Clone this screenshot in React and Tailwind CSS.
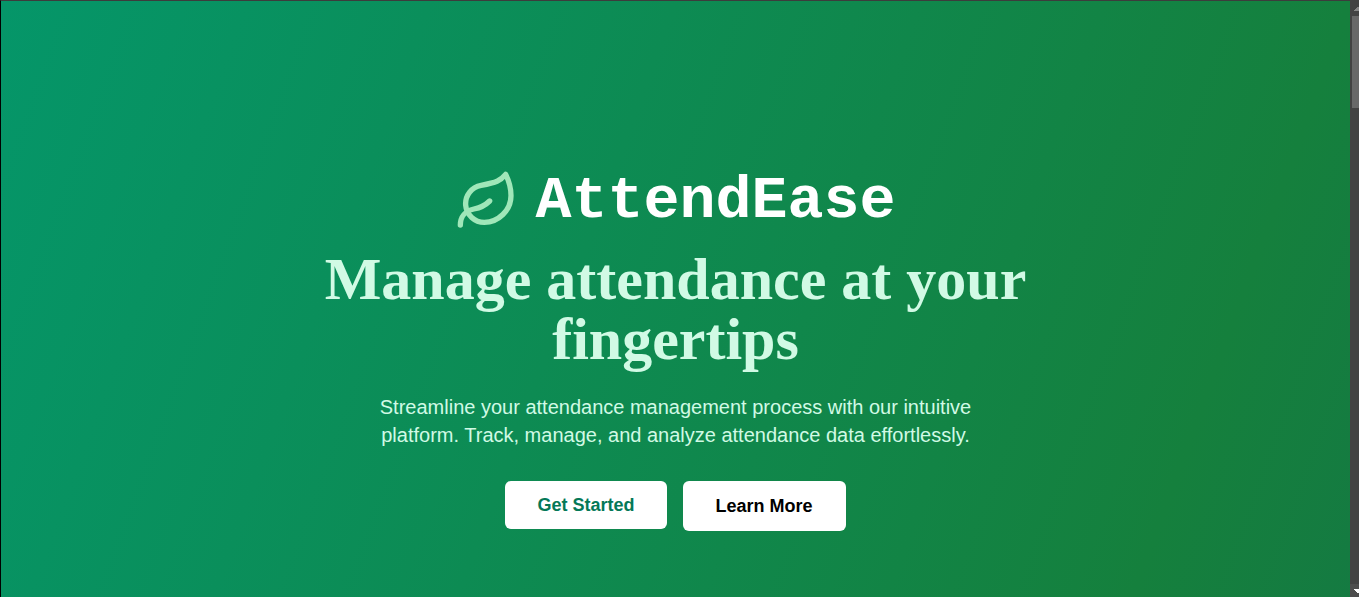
import { Leaf } from "lucide-react";

function Scrollbar() {
  return (
    <div className="flex h-full w-[9px] shrink-0 flex-col overflow-hidden bg-[#424242] pl-0.5">
      <svg className="h-4 w-[7px] shrink-0" viewBox="0 0 7 16" shapeRendering="crispEdges">
        <path d="M5 7h2v1H5zM4 8h3v1H4zM3 9h4v1H3zM2 10h5v1H2z" fill="#868686" />
      </svg>
      <div className="h-[92px] shrink-0 bg-[#686868]" />
      <div className="grow" />
      <svg className="-ml-0.5 h-[13px] w-[9px] shrink-0 bg-[#4d4d4d]" viewBox="0 0 9 13" shapeRendering="crispEdges">
        <path d="M4 5h5v1H4zM5 6h4v1H5zM6 7h3v1H6zM7 8h2v1H7z" fill="#fff" />
      </svg>
    </div>
  );
}

export default function App() {
  return (
    <div className="flex h-[597px] w-[1359px] overflow-hidden bg-[#424242]">
      <div className="w-[1350px] shrink-0 border-l border-t border-l-black border-t-[#3c3c3c]">
        <main className="flex h-[596px] flex-col items-center overflow-hidden bg-linear-to-br/srgb from-[#059669] via-[#15803d] to-[#115e59] bg-[length:100%_3685px] bg-no-repeat pt-[168px] text-center font-['Liberation_Sans',sans-serif]">
          <div className="flex h-16 items-center gap-4">
            <Leaf className="size-16 text-[#a0e7b9]" />
            <span className="font-['Liberation_Mono',monospace] text-6xl leading-none font-bold text-white">AttendEase</span>
          </div>
          <h1 className="mt-4 w-[768px] font-['Liberation_Serif',serif] text-6xl leading-none font-bold text-[#d1fae5]">
            Manage attendance at your fingertips
          </h1>
          <p className="mt-6 w-[600px] text-xl leading-7 text-[#d1fae5]">
            Streamline your attendance management process with our intuitive platform. Track, manage, and analyze attendance data effortlessly.
          </p>
          <div className="mt-8 flex items-start gap-4">
            <button className="h-12 w-[162px] rounded-md bg-white text-lg font-bold text-[#047857]">Get Started</button>
            <button className="h-[50px] w-[163px] rounded-md bg-white pr-px text-lg font-bold text-black">Learn More</button>
          </div>
        </main>
      </div>
      <Scrollbar />
    </div>
  );
}
